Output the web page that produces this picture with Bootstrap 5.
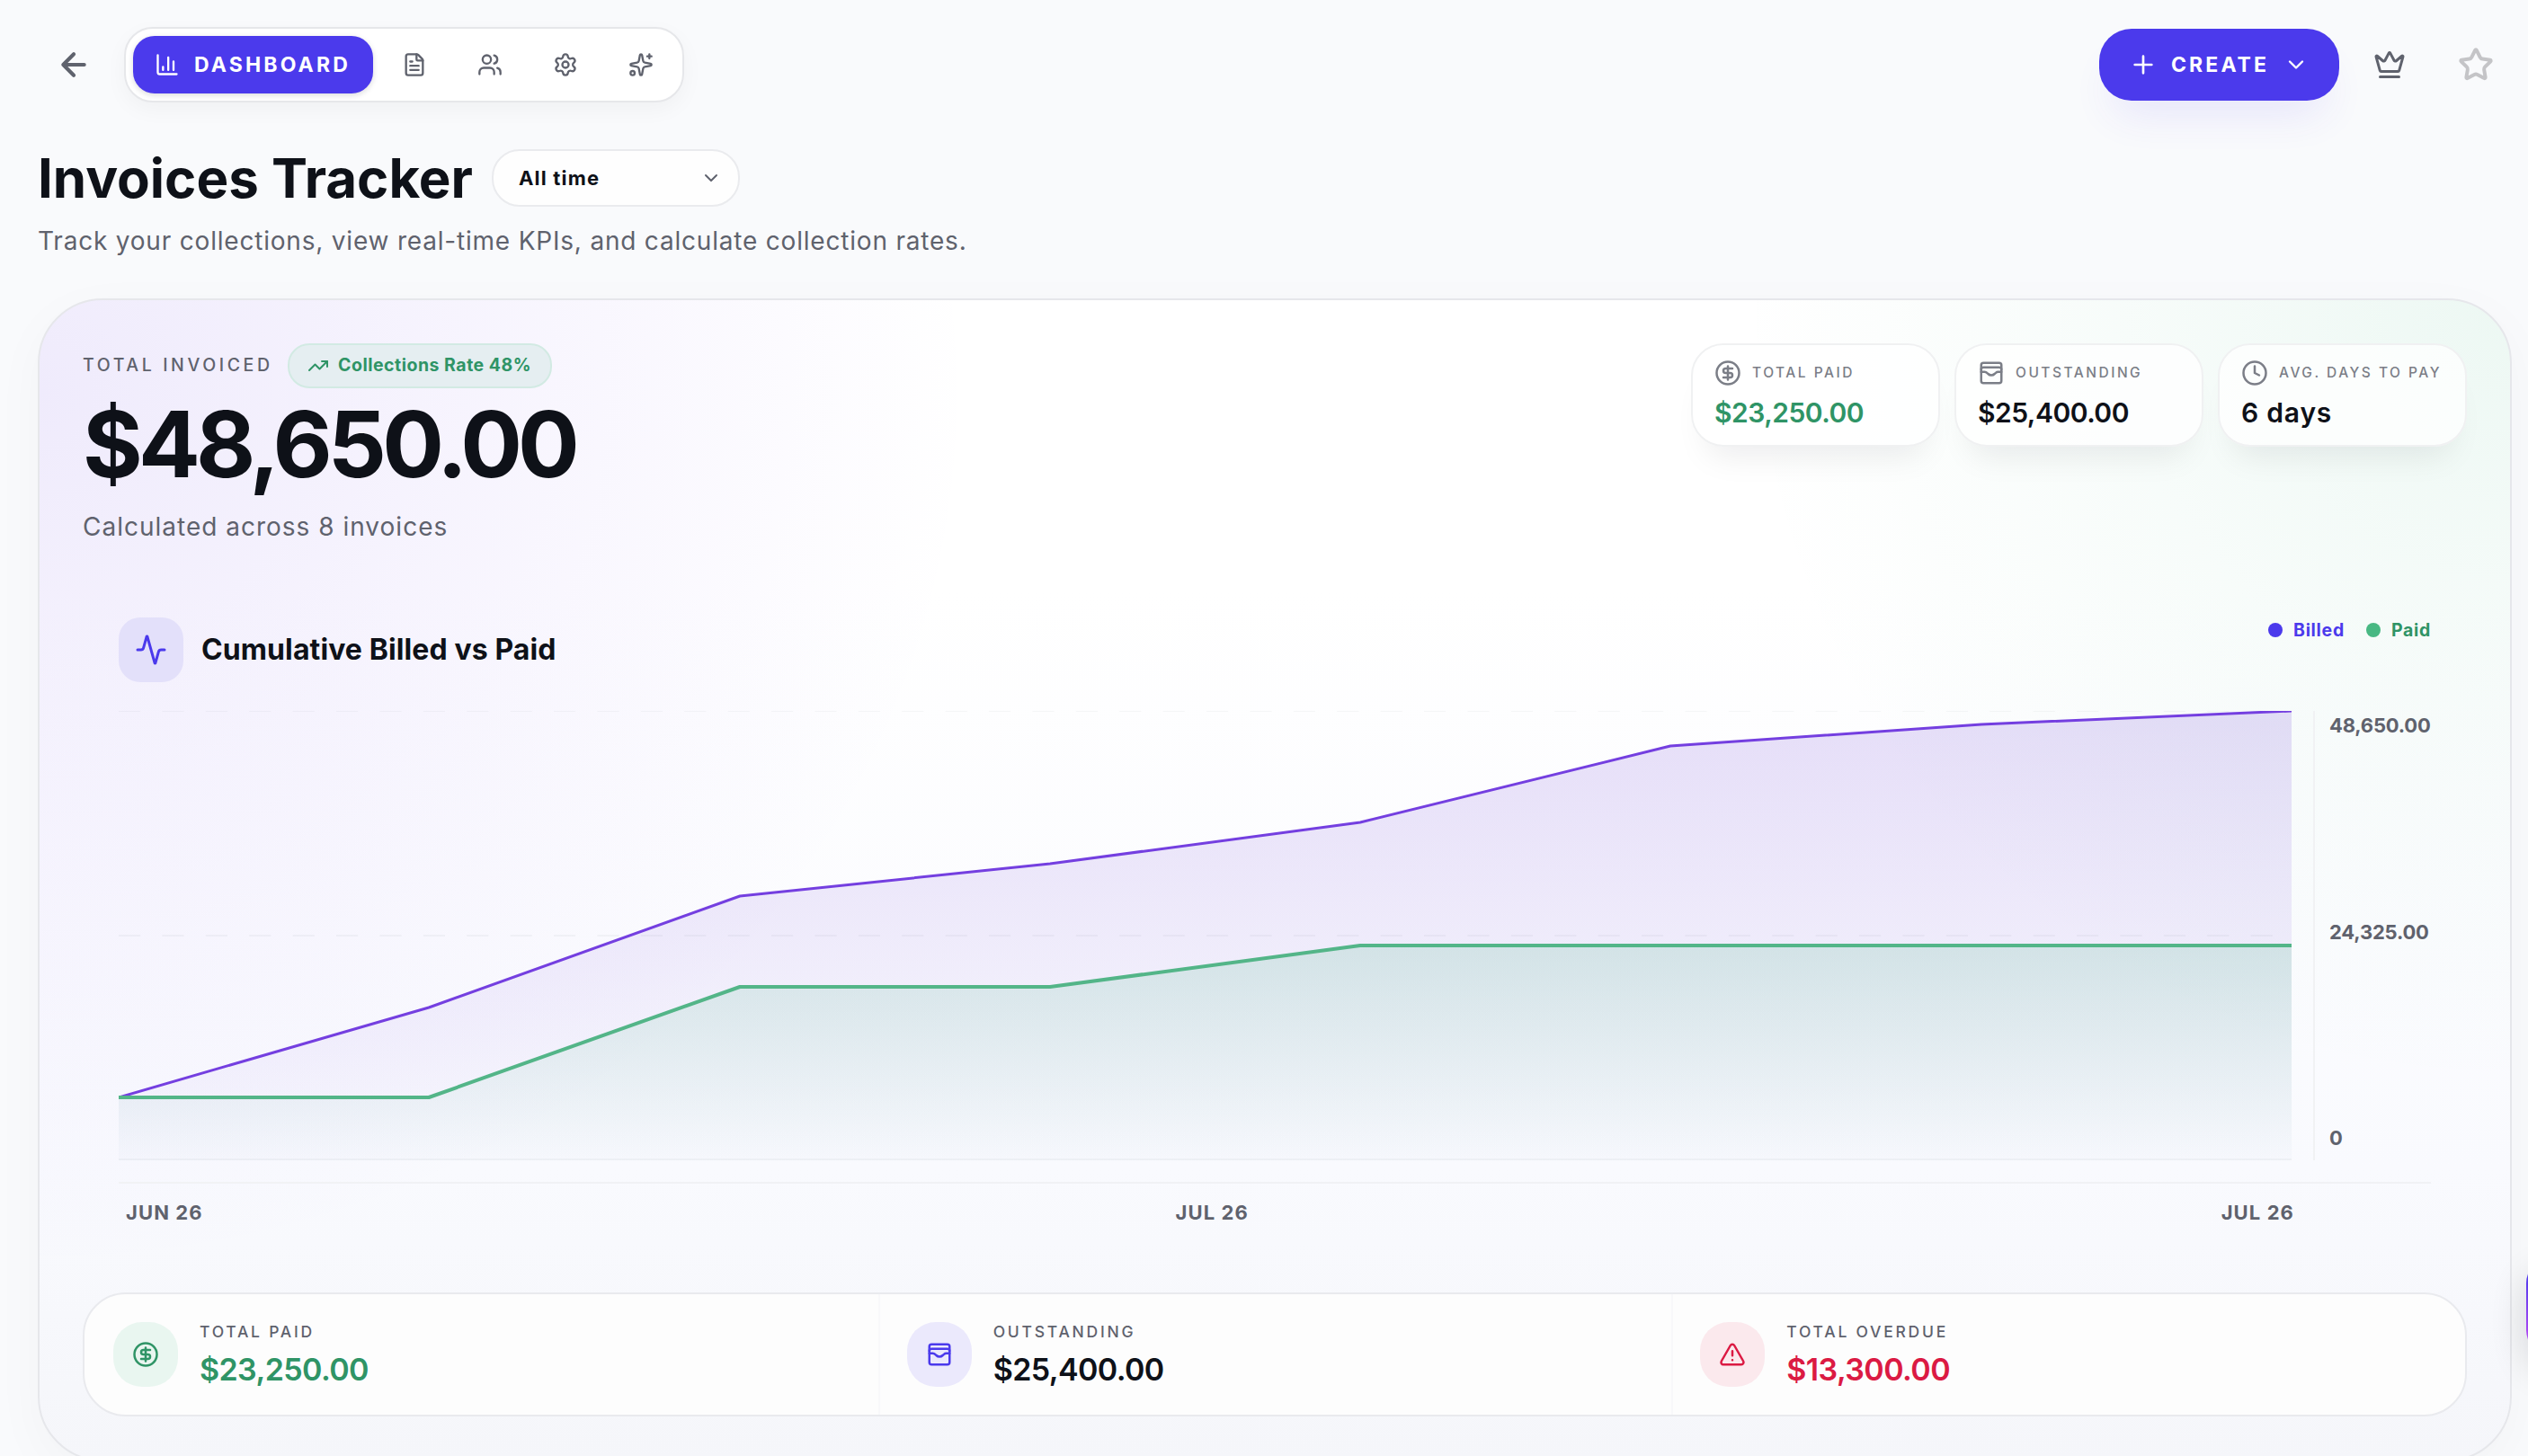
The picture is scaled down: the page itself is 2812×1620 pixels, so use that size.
<!DOCTYPE html>
<html lang="en">
<head>
  <meta charset="UTF-8">
  <title>Invoices Tracker</title>
  <meta name="viewport" content="width=device-width, initial-scale=1" />
  <link href="https://cdn.jsdelivr.net/npm/bootstrap@5.3.0/dist/css/bootstrap.min.css" rel="stylesheet" />
  <style>
    html, body {
      height: 1620px;
      overflow: hidden;
    }

    body {
      background-color: #f9fafc;
      font-family: Inter, "Open Sans", sans-serif;
      color: #0e1118;
    }

    svg {
      display: block;
      flex-shrink: 0;
      fill: none;
      stroke: currentColor;
      stroke-width: 2;
      stroke-linecap: round;
      stroke-linejoin: round;
    }

    .i24 { width: 24px; height: 24px; }
    .i28 { width: 28px; height: 28px; }
    .i30 { width: 30px; height: 30px; }
    .i32 { width: 32px; height: 32px; }
    .i36 { width: 36px; height: 36px; }
    .i40 { width: 40px; height: 40px; }

    .ink-muted { color: #5f626d; }
    .ink-green { color: #2f9466; }
    .ink-red { color: #db1a43; }
    .ink-indigo { color: #4b3aec; }

    /* top bar */
    .topbar {
      padding: 30px 38px 0 62px;
    }

    .ico-back { stroke-width: 2.5; }

    .tab-pill {
      margin-left: 36px;
      padding: 8px;
      gap: 8px;
      border: 2px solid #e6e7ea;
      border-radius: 32px;
      background: #fff;
      box-shadow: 0 8px 24px rgba(15, 17, 24, .04);
    }

    .tab-link {
      height: 64px;
      padding: 0 24px;
      border-radius: 24px;
      color: #5f626d;
      font-size: 23px;
      font-weight: 700;
      text-decoration: none;
    }

    .tab-link.active {
      width: 267px;
      gap: 16px;
      background: #4b3aec;
      color: #fff;
      letter-spacing: 3.15px;
      box-shadow: 0 2px 6px rgba(15, 17, 24, .15);
    }

    .btn-create {
      width: 267px;
      height: 80px;
      padding: 0 34px 0 33px;
      border-radius: 36px;
      background: #4b3aec;
      color: #fff;
      font-size: 23px;
      font-weight: 700;
      letter-spacing: 3.1px;
      border: 0;
      box-shadow: 0 28px 48px -16px rgba(75, 58, 236, .12);
    }

    .create-text { margin-left: 15px; }
    .ico-crown { margin-left: 38px; }

    .ico-star {
      margin-left: 58px;
      color: #c4c4c7;
      stroke-width: 2.4;
    }

    /* page heading */
    .heading {
      padding: 52px 0 0 42px;
    }

    .page-title {
      width: 505px;
      font-size: 60px;
      line-height: 64px;
      font-weight: 700;
      letter-spacing: 0;
      white-space: nowrap;
    }

    .period {
      width: 276px;
      height: 64px;
      padding: 0 18px 0 28px;
      border: 2px solid #eaebee;
      border-radius: 31px;
      background: #fefefe;
      font-size: 22px;
      font-weight: 700;
      letter-spacing: 1.2px;
    }

    .subtitle {
      margin-top: 18px;
      font-size: 28px;
      line-height: 40px;
      letter-spacing: .8px;
    }

    /* main panel */
    .panel {
      margin: 44px 18px 0 42px;
      height: 1294px;
      padding: 48px;
      border: 2px solid #e6e7eb;
      border-radius: 72px;
      background:
        radial-gradient(1040px 980px at 0 8%, rgba(100, 58, 225, .1), rgba(108, 58, 236, .05) 50%, rgba(108, 58, 236, 0)),
        radial-gradient(860px 880px at 100% 0, rgba(52, 176, 124, .09), rgba(52, 176, 124, .04) 50%, rgba(52, 176, 124, 0)),
        linear-gradient(180deg, #fff 0%, #fff 25%, #f9fafe 75%, #f5f6fa 100%);
      box-shadow: 0 16px 60px rgba(15, 17, 24, .03);
    }

    .summary { height: 305px; }

    .over-label {
      width: 228px;
      font-size: 19.5px;
      font-weight: 500;
      letter-spacing: 3.6px;
      white-space: nowrap;
    }

    .rate {
      width: 294px;
      height: 50px;
      padding-left: 20px;
      gap: 10px;
      border: 2px solid #d2eae3;
      border-radius: 24px;
      background: #e5eef1;
      font-size: 19.5px;
      font-weight: 700;
      letter-spacing: .5px;
      white-space: nowrap;
    }

    .big-total {
      margin-top: 7px;
      font-size: 102px;
      line-height: 110px;
      font-weight: 700;
      letter-spacing: -4.9px;
    }

    .calc-note {
      margin-top: 17px;
      font-size: 28px;
      line-height: 40px;
      letter-spacing: 1px;
    }

    .kpi {
      width: 277px;
      height: 115px;
      padding: 16px 0 0 24px;
      border: 2px solid #f0f1f2;
      border-radius: 36px;
      background: rgba(255, 255, 255, .75);
      box-shadow: 0 28px 36px -18px rgba(15, 17, 24, .08);
      white-space: nowrap;
    }

    .kpis { gap: 16px; }

    .kpi-name {
      gap: 12px;
      font-size: 15.5px;
      line-height: 30px;
      font-weight: 500;
      letter-spacing: 2.5px;
      color: #7b7e87;
    }

    .kpi-value {
      margin-top: 9px;
      font-size: 30px;
      line-height: 40px;
      font-weight: 600;
      letter-spacing: -.5px;
    }

    .kpi-days { letter-spacing: .8px; }

    /* chart */
    .chart-area { padding: 0 40px; }

    .chart-head { height: 104px; }

    .tile {
      width: 72px;
      height: 72px;
      border-radius: 24px;
      background: #e3e0fa;
    }

    .chart-title {
      margin-left: 20px;
      font-size: 32px;
      font-weight: 700;
      letter-spacing: .1px;
    }

    .legend-key {
      font-size: 19.5px;
      line-height: 28px;
      font-weight: 700;
      letter-spacing: .7px;
      gap: 12px;
    }

    .dot {
      width: 16px;
      height: 16px;
      border-radius: 50%;
      background: currentColor;
    }

    .dot-paid { background: #48b883; }

    .plot {
      width: 2417px;
      height: 500px;
    }

    .y-axis {
      margin-left: 24px;
      padding: 3px 0 12px 16px;
      border-left: 2px solid #f1f2f4;
      font-size: 22px;
      line-height: 26px;
      font-weight: 700;
      letter-spacing: -.2px;
    }

    .x-axis {
      margin-top: 24px;
      padding: 16px 152px 0 8px;
      height: 123px;
      border-top: 2px solid #f1f2f5;
      font-size: 22px;
      line-height: 32px;
      font-weight: 700;
      letter-spacing: 1.1px;
    }

    /* bottom figures */
    .figures {
      height: 138px;
      border: 2px solid #e9eaee;
      border-radius: 48px;
      background: #fdfdfd;
    }

    .figure-cell {
      padding-left: 32px;
      gap: 24px;
    }

    .figure-cell + .figure-cell {
      padding-left: 30px;
      border-left: 2px solid #f8f8fa;
    }

    .round-tile {
      width: 72px;
      height: 72px;
      border-radius: 32px;
    }

    .figure-name {
      font-size: 17.5px;
      line-height: 26px;
      font-weight: 500;
      letter-spacing: 2.75px;
    }

    .figure-value {
      margin-top: 7px;
      font-size: 34px;
      line-height: 44px;
      font-weight: 600;
      letter-spacing: -.6px;
    }

    /* floating helper button, mostly past the right edge */
    .helper {
      position: absolute;
      left: 2810px;
      top: 1398px;
      width: 112px;
      height: 112px;
      border-radius: 30px;
      background: linear-gradient(180deg, #4b3aec 15%, #b84af4 85%);
      box-shadow: 0 16px 40px rgba(15, 17, 24, .14);
    }
  </style>
</head>
<body class="position-relative">
  <header class="topbar d-flex align-items-center">
    <svg class="i40 ink-muted ico-back" viewBox="0 0 24 24"><path d="m12 19-7-7 7-7M19 12H5"/></svg>
    <nav class="tab-pill d-flex">
      <a class="tab-link active d-flex align-items-center" href="#">
        <svg class="i28" viewBox="0 0 24 24"><path d="M3 3v16a2 2 0 0 0 2 2h16M18 17V9M13 17V5M8 17v-3"/></svg>
        DASHBOARD
      </a>
      <a class="tab-link d-flex align-items-center" href="#">
        <svg class="i28" viewBox="0 0 24 24"><path d="M6 22a2 2 0 0 1-2-2V4a2 2 0 0 1 2-2h8a2.4 2.4 0 0 1 1.704.706l3.588 3.588A2.4 2.4 0 0 1 20 8v12a2 2 0 0 1-2 2z"/><path d="M14 2v5a1 1 0 0 0 1 1h5M10 9H8M16 13H8M16 17H8"/></svg>
      </a>
      <a class="tab-link d-flex align-items-center" href="#">
        <svg class="i28" viewBox="0 0 24 24"><path d="M16 21v-2a4 4 0 0 0-4-4H6a4 4 0 0 0-4 4v2"/><circle cx="9" cy="7" r="4"/><path d="M22 21v-2a4 4 0 0 0-3-3.87M16 3.13a4 4 0 0 1 0 7.75"/></svg>
      </a>
      <a class="tab-link d-flex align-items-center" href="#">
        <svg class="i28" viewBox="0 0 24 24"><path d="M9.671 4.136a2.34 2.34 0 0 1 4.659 0 2.34 2.34 0 0 0 3.319 1.915 2.34 2.34 0 0 1 2.33 4.033 2.34 2.34 0 0 0 0 3.831 2.34 2.34 0 0 1-2.33 4.033 2.34 2.34 0 0 0-3.319 1.915 2.34 2.34 0 0 1-4.659 0 2.34 2.34 0 0 0-3.32-1.915 2.34 2.34 0 0 1-2.33-4.033 2.34 2.34 0 0 0 0-3.831A2.34 2.34 0 0 1 6.35 6.051a2.34 2.34 0 0 0 3.319-1.915"/><circle cx="12" cy="12" r="3"/></svg>
      </a>
      <a class="tab-link d-flex align-items-center" href="#">
        <svg class="i28" viewBox="0 0 24 24"><path d="M11.017 2.814a1 1 0 0 1 1.966 0l1.051 5.558a2 2 0 0 0 1.594 1.594l5.558 1.051a1 1 0 0 1 0 1.966l-5.558 1.051a2 2 0 0 0-1.594 1.594l-1.051 5.558a1 1 0 0 1-1.966 0l-1.051-5.558a2 2 0 0 0-1.594-1.594l-5.558-1.051a1 1 0 0 1 0-1.966l5.558-1.051a2 2 0 0 0 1.594-1.594zM20 2v4M22 4h-4"/><circle cx="4" cy="20" r="2"/></svg>
      </a>
    </nav>
    <button class="btn-create d-flex align-items-center ms-auto" type="button">
      <svg class="i32" viewBox="0 0 24 24"><path d="M5 12h14M12 5v14"/></svg>
      <span class="create-text">CREATE</span>
      <svg class="i28 ms-auto" viewBox="0 0 24 24"><path d="m6 9 6 6 6-6"/></svg>
    </button>
    <svg class="i36 ink-muted ico-crown" viewBox="0 0 24 24"><path d="M11.562 3.266a.5.5 0 0 1 .876 0L15.39 8.87a1 1 0 0 0 1.516.294L21.183 5.5a.5.5 0 0 1 .798.519l-2.834 10.246a1 1 0 0 1-.956.734H5.81a1 1 0 0 1-.957-.734L2.02 6.02a.5.5 0 0 1 .798-.519l4.276 3.664a1 1 0 0 0 1.516-.294zM5 21h14"/></svg>
    <svg class="i40 ico-star" viewBox="0 0 24 24"><path d="M11.525 2.295a.53.53 0 0 1 .95 0l2.31 4.679a2.123 2.123 0 0 0 1.595 1.16l5.166.756a.53.53 0 0 1 .294.904l-3.736 3.638a2.123 2.123 0 0 0-.611 1.878l.882 5.14a.53.53 0 0 1-.771.56l-4.618-2.428a2.122 2.122 0 0 0-1.973 0L6.396 21.01a.53.53 0 0 1-.77-.56l.881-5.139a2.122 2.122 0 0 0-.611-1.879L2.16 9.795a.53.53 0 0 1 .294-.906l5.165-.755a2.122 2.122 0 0 0 1.597-1.16z"/></svg>
  </header>

  <section class="heading">
    <div class="d-flex align-items-center">
      <h1 class="page-title m-0">Invoices Tracker</h1>
      <div class="period d-flex align-items-center justify-content-between">
        <span>All time</span>
        <svg class="i24 ink-muted" viewBox="0 0 24 24"><path d="m6 9 6 6 6-6"/></svg>
      </div>
    </div>
    <p class="subtitle ink-muted mb-0">Track your collections, view real-time KPIs, and calculate collection rates.</p>
  </section>

  <main class="panel">
    <div class="summary d-flex justify-content-between align-items-start">
      <div>
        <div class="d-flex align-items-center">
          <div class="over-label ink-muted">TOTAL INVOICED</div>
          <div class="rate d-flex align-items-center ink-green">
            <svg class="i24" viewBox="0 0 24 24"><path d="M16 7h6v6"/><path d="m22 7-8.5 8.5-5-5L2 17"/></svg>
            Collections Rate 48%
          </div>
        </div>
        <div class="big-total">$48,650.00</div>
        <div class="calc-note ink-muted">Calculated across 8 invoices</div>
      </div>
      <div class="kpis d-flex">
        <div class="kpi">
          <div class="kpi-name d-flex align-items-center">
            <svg class="i30" viewBox="0 0 24 24"><circle cx="12" cy="12" r="10"/><path d="M16 8h-6a2 2 0 1 0 0 4h4a2 2 0 1 1 0 4H8M12 18V6"/></svg>
            TOTAL PAID
          </div>
          <div class="kpi-value ink-green">$23,250.00</div>
        </div>
        <div class="kpi">
          <div class="kpi-name d-flex align-items-center">
            <svg class="i30" viewBox="0 0 24 24"><rect width="18" height="18" x="3" y="3" rx="2"/><path d="M3 9a2 2 0 0 1 2-2h14a2 2 0 0 1 2 2M3 11h3c.8 0 1.6.3 2.1.9l1.1.9c1.6 1.6 4.1 1.6 5.7 0l1.1-.9c.5-.5 1.3-.9 2.1-.9H21"/></svg>
            OUTSTANDING
          </div>
          <div class="kpi-value">$25,400.00</div>
        </div>
        <div class="kpi">
          <div class="kpi-name d-flex align-items-center">
            <svg class="i30" viewBox="0 0 24 24"><circle cx="12" cy="12" r="10"/><path d="M12 6v6l4 2"/></svg>
            AVG. DAYS TO PAY
          </div>
          <div class="kpi-value kpi-days">6 days</div>
        </div>
      </div>
    </div>

    <div class="chart-area">
      <div class="chart-head d-flex justify-content-between align-items-start">
        <div class="d-flex align-items-center">
          <div class="tile d-flex align-items-center justify-content-center ink-indigo">
            <svg class="i36" viewBox="0 0 24 24"><path d="M22 12h-2.48a2 2 0 0 0-1.93 1.46l-2.35 8.36a.25.25 0 0 1-.48 0L9.24 2.18a.25.25 0 0 0-.48 0l-2.35 8.36A2 2 0 0 1 4.49 12H2"/></svg>
          </div>
          <h2 class="chart-title mb-0">Cumulative Billed vs Paid</h2>
        </div>
        <div class="d-flex gap-4">
          <div class="legend-key d-flex align-items-center ink-indigo"><span class="dot"></span>Billed</div>
          <div class="legend-key d-flex align-items-center ink-green"><span class="dot dot-paid"></span>Paid</div>
        </div>
      </div>
      <div class="d-flex">
        <svg class="plot" viewBox="0 0 2417 500">
          <defs>
            <linearGradient id="billedFill" x1="0" y1="0" x2="0" y2="1">
              <stop offset="0" stop-color="#6a3ad6" stop-opacity=".165"/>
              <stop offset="1" stop-color="#6a3ad6" stop-opacity=".01"/>
            </linearGradient>
            <linearGradient id="paidFill" x1="0" y1="0" x2="0" y2="1">
              <stop offset="0" stop-color="#48b883" stop-opacity=".17"/>
              <stop offset="1" stop-color="#48b883" stop-opacity=".01"/>
            </linearGradient>
          </defs>
          <g stroke="#0e1118" stroke-opacity=".035" stroke-linecap="butt">
            <path d="M0 0H2417M0 250H2417" stroke-dasharray="24.2 24.2"/>
            <path d="M0 499H2417"/>
          </g>
          <path d="M0 430L345 330L691 206L1036 170L1381 124L1726 39L2072 15L2417 0V500H0Z" fill="url(#billedFill)" stroke="none"/>
          <path d="M0 430H345L691 307H1036L1381 261H2417V500H0Z" fill="url(#paidFill)" stroke="none"/>
          <path d="M0 430L345 330L691 206L1036 170L1381 124L1726 39L2072 15L2417 0" stroke="#743fe0" stroke-width="3"/>
          <path d="M0 430H345L691 307H1036L1381 261H2417" stroke="#53b588" stroke-width="4"/>
        </svg>
        <div class="y-axis d-flex flex-column justify-content-between ink-muted">
          <span>48,650.00</span>
          <span>24,325.00</span>
          <span>0</span>
        </div>
      </div>
      <div class="x-axis d-flex justify-content-between ink-muted">
        <span>JUN 26</span>
        <span>JUL 26</span>
        <span>JUL 26</span>
      </div>
    </div>

    <div class="figures row g-0">
      <div class="figure-cell col-4 d-flex align-items-center">
        <div class="round-tile d-flex align-items-center justify-content-center ink-green" style="background: #e9f6f0">
          <svg class="i30" viewBox="0 0 24 24"><circle cx="12" cy="12" r="10"/><path d="M16 8h-6a2 2 0 1 0 0 4h4a2 2 0 1 1 0 4H8M12 18V6"/></svg>
        </div>
        <div>
          <div class="figure-name ink-muted">TOTAL PAID</div>
          <div class="figure-value ink-green">$23,250.00</div>
        </div>
      </div>
      <div class="figure-cell col-4 d-flex align-items-center">
        <div class="round-tile d-flex align-items-center justify-content-center ink-indigo" style="background: #ebe9fc">
          <svg class="i30" viewBox="0 0 24 24"><rect width="18" height="18" x="3" y="3" rx="2"/><path d="M3 9a2 2 0 0 1 2-2h14a2 2 0 0 1 2 2M3 11h3c.8 0 1.6.3 2.1.9l1.1.9c1.6 1.6 4.1 1.6 5.7 0l1.1-.9c.5-.5 1.3-.9 2.1-.9H21"/></svg>
        </div>
        <div>
          <div class="figure-name ink-muted">OUTSTANDING</div>
          <div class="figure-value">$25,400.00</div>
        </div>
      </div>
      <div class="figure-cell col-4 d-flex align-items-center">
        <div class="round-tile d-flex align-items-center justify-content-center ink-red" style="background: #fbe9ed">
          <svg class="i30" viewBox="0 0 24 24"><path d="m21.73 18-8-14a2 2 0 0 0-3.48 0l-8 14A2 2 0 0 0 4 21h16a2 2 0 0 0 1.73-3M12 9v4M12 17h.01"/></svg>
        </div>
        <div>
          <div class="figure-name ink-muted">TOTAL OVERDUE</div>
          <div class="figure-value ink-red">$13,300.00</div>
        </div>
      </div>
    </div>
  </main>

  <div class="helper"></div>

  <script src="https://cdn.jsdelivr.net/npm/bootstrap@5.3.0/dist/js/bootstrap.bundle.min.js"></script>
</body>
</html>
